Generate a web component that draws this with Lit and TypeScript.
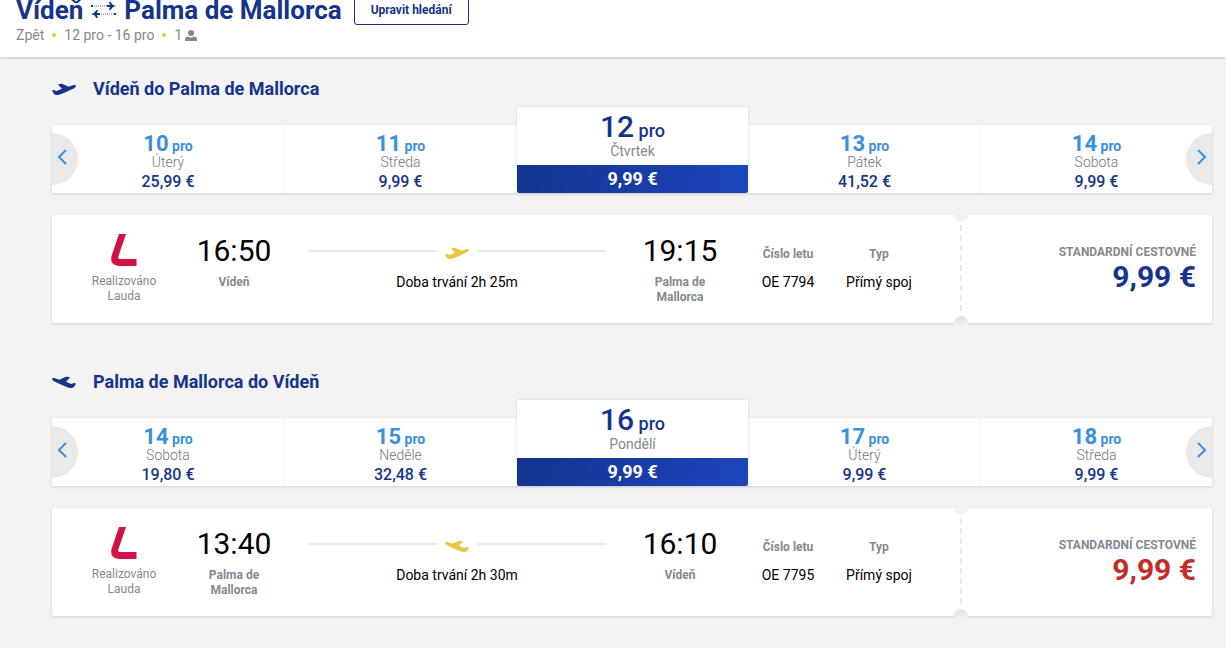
import { LitElement, html, css, svg } from "lit";
import { customElement, property } from "lit/decorators.js";

interface Day {
  num: number;
  name: string;
  price: string;
  selected?: boolean;
}

interface Flight {
  title: string;
  inbound: boolean;
  days: Day[];
  depart: string;
  from: string;
  arrive: string;
  to: string;
  duration: string;
  code: string;
  price: string;
}

const flights: Flight[] = [
  {
    title: "Vídeň do Palma de Mallorca",
    inbound: false,
    days: [
      { num: 10, name: "Úterý", price: "25,99 €" },
      { num: 11, name: "Středa", price: "9,99 €" },
      { num: 12, name: "Čtvrtek", price: "9,99 €", selected: true },
      { num: 13, name: "Pátek", price: "41,52 €" },
      { num: 14, name: "Sobota", price: "9,99 €" },
    ],
    depart: "16:50",
    from: "Vídeň",
    arrive: "19:15",
    to: "Palma de Mallorca",
    duration: "2h 25m",
    code: "OE 7794",
    price: "9,99 €",
  },
  {
    title: "Palma de Mallorca do Vídeň",
    inbound: true,
    days: [
      { num: 14, name: "Sobota", price: "19,80 €" },
      { num: 15, name: "Neděle", price: "32,48 €" },
      { num: 16, name: "Pondělí", price: "9,99 €", selected: true },
      { num: 17, name: "Úterý", price: "9,99 €" },
      { num: 18, name: "Středa", price: "9,99 €" },
    ],
    depart: "13:40",
    from: "Palma de Mallorca",
    arrive: "16:10",
    to: "Vídeň",
    duration: "2h 30m",
    code: "OE 7795",
    price: "9,99 €",
  },
];

const planePath = svg`<path d="M0 23 Q4 20 8 22 L14 24 L30 17 L19 6 Q18 3 22 3 L30 2 L50 11 L62 7 Q70 4 72 8 Q72 12 66 16 L44 26 L28 33 Q18 37 10 35 Q5 34 4 29 Z"/>`;

const plane = (inbound: boolean) => html`<svg class="plane" viewBox="0 0 72 36" aria-hidden="true">
  <g fill="currentColor" transform=${inbound ? "translate(72 0) scale(-1 1)" : "translate(0 0)"}>${planePath}</g>
</svg>`;

const shared = css`
  :host {
    display: block;
  }
  * {
    box-sizing: border-box;
  }
  button {
    font: inherit;
    color: inherit;
    border: 0;
    padding: 0;
    margin: 0;
    background: none;
    cursor: pointer;
  }
  .plane {
    display: block;
    width: 24px;
    height: 12px;
    flex: none;
  }
`;

@customElement("date-carousel")
class DateCarousel extends LitElement {
  @property({ attribute: false }) days: Day[] = [];

  static styles = [
    shared,
    css`
      .strip {
        position: relative;
        display: grid;
        grid-template-columns: repeat(5, 1fr);
        grid-auto-rows: 68px;
        align-items: end;
        background: #fff;
        box-shadow: 0 1px 3px rgba(0, 0, 0, 0.14);
      }
      .day {
        display: flex;
        flex-direction: column;
        align-items: center;
        height: 68px;
        padding-top: 7px;
        color: #3a8fde;
        border-left: 1px solid #f3f3f3;
      }
      .day:first-child {
        border-left: 0;
      }
      .date {
        font-size: 14px;
        font-weight: 700;
        line-height: 16px;
      }
      .num {
        font-size: 22px;
        line-height: 23px;
      }
      .name {
        font-size: 14px;
        font-weight: 300;
        line-height: 14px;
        color: #71777d;
      }
      .price {
        font-size: 16px;
        font-weight: 500;
        line-height: 26px;
        color: #15348a;
      }
      .selected {
        height: 86px;
        padding-top: 3px;
        color: #15348a;
        background: #fff;
        border: 0;
        border-radius: 2px;
        box-shadow: 0 0 3px rgba(0, 0, 0, 0.14);
        margin-left: 1px;
        overflow: hidden;
      }
      .selected .date {
        font-size: 18px;
        font-weight: 500;
        line-height: 20px;
      }
      .selected .num {
        font-size: 30px;
        line-height: 34px;
      }
      .selected .name {
        font-weight: 400;
        color: #84898f;
      }
      .selected .price {
        width: 100%;
        margin-top: 7px;
        font-size: 18px;
        font-weight: 700;
        line-height: 28px;
        color: #fff;
        background: linear-gradient(100deg, #13348e, #1c46bd);
      }
      .arrow {
        position: absolute;
        top: 8px;
        width: 26px;
        height: 52px;
        background: #e9e9e9;
        display: flex;
        align-items: center;
        justify-content: center;
      }
      .prev {
        left: 0;
        padding-right: 6px;
        border-radius: 0 26px 26px 0;
      }
      .next {
        right: 0;
        padding-left: 6px;
        border-radius: 26px 0 0 26px;
      }
      .chevron {
        width: 10px;
        height: 16px;
        margin-bottom: 4px;
      }
    `,
  ];

  render() {
    return html`<div class="strip">
      ${this.days.map(
        (d) => html`<button class="day ${d.selected ? "selected" : ""}" aria-pressed=${d.selected ? "true" : "false"}>
          <span class="date"><span class="num">${d.num}</span> pro</span>
          <span class="name">${d.name}</span>
          <span class="price">${d.price}</span>
        </button>`
      )}
      <button class="arrow prev" aria-label="Předchozí dny">
        <svg class="chevron" viewBox="0 0 10 16"><path d="M9 1 L2 8 L9 15" fill="none" stroke="#3a8fde" stroke-width="2"/></svg>
      </button>
      <button class="arrow next" aria-label="Další dny">
        <svg class="chevron" viewBox="0 0 10 16"><path d="M1 1 L8 8 L1 15" fill="none" stroke="#3a8fde" stroke-width="2"/></svg>
      </button>
    </div>`;
  }
}

@customElement("flight-card")
class FlightCard extends LitElement {
  @property({ attribute: false }) flight!: Flight;

  static styles = [
    shared,
    css`
      .card {
        position: relative;
        display: grid;
        grid-template-columns: minmax(0, 1fr) 251px;
        background: #fff;
        border-radius: 2px;
        min-height: 108px;
        box-shadow: 0 1px 3px rgba(0, 0, 0, 0.14);
      }
      .info {
        display: grid;
        grid-template-columns: 110px 110px minmax(0, 1fr) 110px 106px 76px;
        padding: 18px 44px 15px 17px;
        text-align: center;
        font-size: 12px;
        line-height: 15px;
        color: #84898f;
      }
      .carrier {
        display: flex;
        flex-direction: column;
        align-items: center;
      }
      .logo {
        width: 26px;
        height: 32px;
        margin: 1px 0 8px;
      }
      .time {
        font-size: 30px;
        line-height: 36px;
        color: #000;
        margin-bottom: 6px;
      }
      .city {
        font-weight: 700;
        padding: 0 20px;
      }
      .path {
        padding: 0 19px;
      }
      .line {
        display: flex;
        align-items: center;
        gap: 8px;
        height: 36px;
        color: #eac645;
      }
      .line::before,
      .line::after {
        content: "";
        flex: 1;
        height: 2px;
        background: #e9e9e9;
      }
      .line .plane {
        margin-top: 4px;
      }
      .value {
        font-size: 14px;
        line-height: 20px;
        color: #000;
        white-space: nowrap;
      }
      .path .value {
        margin-top: 3px;
      }
      .label {
        font-weight: 700;
        padding-top: 14px;
      }
      .detail .value {
        margin-top: 10px;
      }
      .fare {
        position: relative;
        padding: 28px 16px;
        text-align: right;
      }
      .tear {
        position: absolute;
        left: -1px;
        top: 10px;
        bottom: 8px;
        width: 2px;
        background: repeating-linear-gradient(#e9e9e9 0 6px, transparent 6px 10px);
      }
      .notch {
        position: absolute;
        left: -7px;
        width: 14px;
        height: 7px;
        background: #f3f3f3;
      }
      .top {
        top: 0;
        border-radius: 0 0 7px 7px;
      }
      .bottom {
        bottom: -3px;
        height: 10px;
        border-radius: 7px 7px 0 0;
        background: linear-gradient(#e1e1e1, #f3f3f3);
      }
      .caption {
        font-size: 12px;
        font-weight: 700;
        line-height: 18px;
        color: #84898f;
      }
      .amount {
        font-size: 30px;
        font-weight: 700;
        line-height: 31px;
        color: #15348a;
      }
      .low {
        color: #c52b27;
      }
    `,
  ];

  render() {
    const f = this.flight;
    return html`<div class="card">
      <div class="info">
        <div class="carrier">
          <svg class="logo" viewBox="0 0 26 32" aria-hidden="true">
            <path d="M8 0 H15 L7.5 22 Q6.5 25 9 25 H25.500 V32 H8 Q-1.500 31 .5 22 Z" fill="#d31145"/>
          </svg>
          <div>Realizováno<br />Lauda</div>
        </div>
        <div>
          <div class="time">${f.depart}</div>
          <div class="city">${f.from}</div>
        </div>
        <div class="path">
          <div class="line">${plane(f.inbound)}</div>
          <div class="value">Doba trvání ${f.duration}</div>
        </div>
        <div>
          <div class="time">${f.arrive}</div>
          <div class="city">${f.to}</div>
        </div>
        <div class="detail">
          <div class="label">Číslo letu</div>
          <div class="value">${f.code}</div>
        </div>
        <div class="detail">
          <div class="label">Typ</div>
          <div class="value">Přímý spoj</div>
        </div>
      </div>
      <div class="fare">
        <span class="tear"></span><span class="notch top"></span><span class="notch bottom"></span>
        <div class="caption">STANDARDNÍ CESTOVNÉ</div>
        <div class="amount ${f.inbound ? "low" : ""}">${f.price}</div>
      </div>
    </div>`;
  }
}

@customElement("app-root")
class AppRoot extends LitElement {
  static styles = [
    shared,
    css`
      :host {
        display: flow-root;
        min-height: 100vh;
        background: #f3f3f3;
        font-family: Roboto, sans-serif;
        color: #15348a;
      }
      .header {
        margin-top: -5px;
        padding: 0 16px 12px;
        background: #fff;
        box-shadow: 0 1px 3px rgba(0, 0, 0, 0.2);
      }
      .route {
        display: flex;
        align-items: center;
        gap: 8px;
      }
      .heading {
        display: flex;
        align-items: center;
        gap: 8px;
        margin: 0;
        font-size: 26px;
        font-weight: 700;
        line-height: 30px;
      }
      .swap {
        width: 25px;
        height: 16px;
      }
      .edit {
        height: 30px;
        margin-left: 4px;
        padding: 0 16px;
        border: 1px solid #15348a;
        border-radius: 3px;
        font-size: 12px;
        font-weight: 700;
      }
      .summary {
        display: flex;
        align-items: center;
        gap: 8px;
        font-size: 14px;
        line-height: 20px;
        color: #84898f;
      }
      .dot {
        width: 4px;
        height: 4px;
        border-radius: 50%;
        background: #eac645;
      }
      .back {
        color: inherit;
        text-decoration: none;
      }
      .pax {
        display: flex;
        align-items: center;
        gap: 3px;
      }
      .person {
        width: 12px;
        height: 11px;
      }
      .main {
        padding: 20px 14px 31px 52px;
      }
      .title {
        display: flex;
        align-items: center;
        gap: 17px;
        margin: 0 0 24px;
        font-size: 18px;
        font-weight: 700;
        line-height: 24px;
      }
      .leg + .leg {
        margin-top: 47px;
      }
      .card {
        margin-top: 22px;
      }
    `,
  ];

  render() {
    return html`
      <header class="header">
        <div class="route">
          <h1 class="heading">
            Vídeň
            <svg class="swap" viewBox="0 0 25 16" aria-hidden="true">
              <g fill="none" stroke="#8b9ac6" stroke-dasharray="1 1"><path d="M1 4 H17" stroke-width="1.500"/><path d="M8 12 H24" stroke-width="1.500"/></g>
              <g fill="#15348a">
                <path d="M16 3 H19 L18 0 H19.500 L22 3 L25 4 L22 5 L19.500 8 H18 L19 5 H16 Z"/>
                <path d="M9 11 H6 L7 8 H5.500 L3 11 L0 12 L3 13 L5.500 16 H7 L6 13 H9 Z"/>
                <path d="M0 3 H2 V5 H0 Z"/>
                <path d="M23 11 H25 V13 H23 Z"/>
              </g>
            </svg>
            Palma de Mallorca
          </h1>
          <button class="edit">Upravit hledání</button>
        </div>
        <div class="summary">
          <a class="back" href="#">Zpět</a><span class="dot"></span><span>12 pro - 16 pro</span><span class="dot"></span>
          <span class="pax">1
            <svg class="person" viewBox="0 0 12 11" aria-hidden="true"><circle cx="6" cy="3" r="3" fill="#84898f"/><path d="M0 11 V9 Q0 7 3 6.500 Q6 8.500 9 6.500 Q12 7 12 9 V11 Z" fill="#84898f"/></svg>
          </span>
        </div>
      </header>
      <main class="main">
        ${flights.map(
          (f) => html`<section class="leg">
            <h2 class="title">${plane(f.inbound)}${f.title}</h2>
            <date-carousel .days=${f.days}></date-carousel>
            <flight-card class="card" .flight=${f}></flight-card>
          </section>`
        )}
      </main>
    `;
  }
}
